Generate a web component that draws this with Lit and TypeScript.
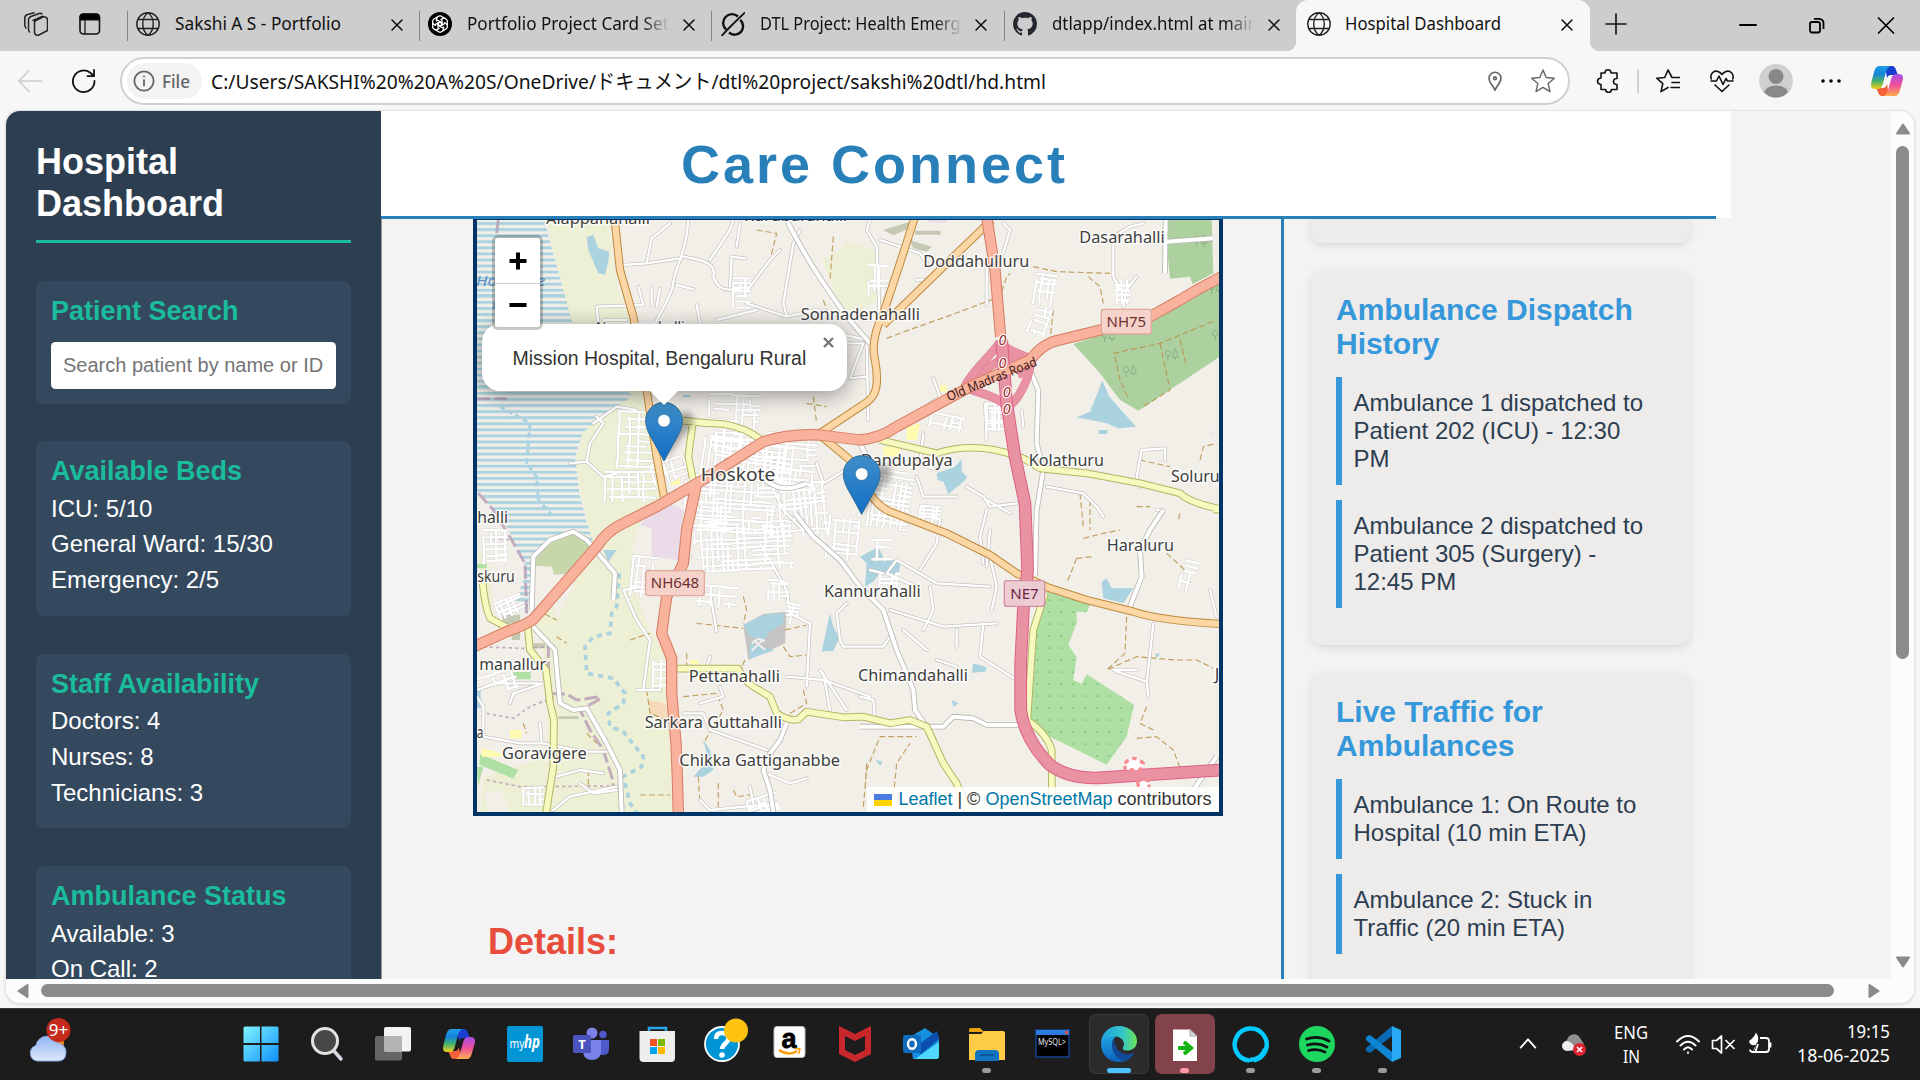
import { LitElement, html, svg, css } from "lit";
import { customElement, property } from "lit/decorators.js";

/* ---------- helpers ---------- */

// Text squeezed to a known width, so UI labels keep their metrics in any font.
const fit = (text: string, width: number, size: number, color = "#111", weight = 400) => html`
  <svg class="fit" width=${width} height=${Math.round(size * 1.5)} style="overflow:visible">
    <text x="0" y=${size * 1.1} textLength=${width} lengthAdjust="spacingAndGlyphs" font-size=${size}
      font-weight=${weight} fill=${color} font-family='"Noto Sans","Noto Sans CJK JP",sans-serif'>${text}</text>
  </svg>`;

const stroke = (d: string, size = 24, color = "#111", w = 1.6) => html`
  <svg width=${size} height=${size} viewBox="0 0 24 24" fill="none" stroke=${color} stroke-width=${w}
    stroke-linecap="round" stroke-linejoin="round"><path d=${d}/></svg>`;

const CROSS = "M6 6L18 18M18 6L6 18";
const GLOBE = "M12 .8a11.2 11.2 0 1 0 0 22.4a11.2 11.2 0 1 0 0-22.4M12 .8c-7 5-7 17.400 0 22.400M12 .8c7 5 7 17.400 0 22.400M2.200 7.500h19.600M2.200 16.500h19.600";

/* ---------- map ---------- */

function rng(seed: number) {
  let s = seed;
  return () => ((s = (s * 16807) % 2147483647) / 2147483647);
}

// A block of short, slightly broken streets: centre, size, tilt and spacing.
function streets(cx: number, cy: number, w: number, h: number, tilt: number, gap: number, seed: number) {
  const r = rng(seed);
  const c = Math.cos(tilt), s = Math.sin(tilt);
  const p = (x: number, y: number) => `${(cx + x * c - y * s).toFixed(0)} ${(cy + x * s + y * c).toFixed(0)}`;
  let d = "";
  for (let y = -h / 2; y < h / 2; y += gap * (0.7 + r() * 0.6)) {
    let x = -w / 2 + r() * w * 0.2;
    while (x < w / 2) {
      const l = 25 + r() * 90;
      if (r() > 0.28) d += `M${p(x, y)}L${p(Math.min(w / 2, x + l), y + (r() - 0.5) * 6)}`;
      x += l;
    }
  }
  for (let x = -w / 2; x < w / 2; x += gap * (0.8 + r() * 0.9)) {
    let y = -h / 2 + r() * h * 0.2;
    while (y < h / 2) {
      const l = 20 + r() * 80;
      if (r() > 0.36) d += `M${p(x, y)}L${p(x + (r() - 0.5) * 6, Math.min(h / 2, y + l))}`;
      y += l;
    }
  }
  return d;
}

const TOWN = [
  streets(790, 640, 150, 170, 0.05, 15, 11), streets(830, 740, 260, 130, 0.12, 14, 12),
  streets(520, 690, 150, 170, 0.03, 19, 13), streets(600, 780, 110, 60, -0.3, 16, 14),
  streets(480, 830, 150, 90, 0, 19, 15), streets(780, 880, 270, 180, 0.06, 13, 16),
  streets(960, 760, 150, 170, 0.1, 15, 17), streets(820, 1010, 290, 140, -0.05, 14, 18),
  streets(1000, 900, 140, 160, -0.1, 17, 19), streets(1120, 980, 90, 140, 0.1, 18, 20),
  streets(520, 1100, 70, 120, 0.1, 17, 21), streets(730, 1160, 140, 60, 0.1, 20, 22),
  streets(925, 1140, 60, 60, 0, 13, 23), streets(1260, 870, 120, 170, 0.15, 15, 24),
  streets(1235, 1020, 60, 60, 0, 16, 25), streets(1575, 620, 50, 80, 0, 12, 26),
  streets(1725, 240, 60, 90, 0.15, 14, 27), streets(1710, 330, 50, 90, 0.3, 14, 28),
  streets(1420, 635, 120, 40, 0.2, 16, 29), streets(75, 1010, 70, 100, 0, 17, 30),
  streets(120, 1190, 80, 50, -0.4, 15, 31), streets(1960, 245, 40, 70, 0, 14, 32),
  streets(2155, 1100, 40, 90, 0.3, 14, 33), streets(880, 1785, 90, 50, -0.3, 12, 34),
  streets(190, 1760, 60, 50, 0, 15, 35), streets(575, 1390, 50, 90, 0, 17, 36),
  streets(1225, 210, 60, 90, 0, 15, 37), streets(815, 250, 50, 90, 0, 15, 38),
  streets(965, 1210, 40, 60, 0.2, 13, 39), streets(1260, 1110, 60, 40, 0, 14, 40),
  streets(80, 1420, 120, 60, -0.3, 24, 41), streets(1380, 915, 60, 50, 0.1, 12, 42),
].join("");

const LANES = `
M655 30C650 130 610 180 608 230C590 290 560 320 555 345M455 165L530 160L545 85L600 40M530 160L630 145M620 225L670 238
M640 140C700 150 740 160 730 200C750 260 800 230 810 240M780 230L785 140L825 145M720 150L780 60L790 30M810 40L800 110
M380 290L520 285M380 290L385 345M400 330L470 330M505 230L520 285M545 232L545 285M570 235L560 290M680 285L690 340
M830 245L870 190L900 150L930 120M830 280L950 320L1040 300L1190 330M950 320L940 280L970 100L990 60M740 330L860 300
M1060 360L1190 390M950 400L1180 400L1140 505L1190 500M370 640L440 590L500 600M300 760L350 755L360 700L400 640L380 620
M350 755L400 800L440 790M1040 760L1060 820L1160 760M905 830L940 900L1000 960M1200 30L1190 60L1220 110L1230 350
M1370 160L1350 130L1230 90M1340 210L1380 208M1550 170L1550 285M1600 40L1620 60L1600 130M1930 90L1930 200L1950 240
M1930 80L1980 50L2020 40M2000 200L1970 240L1960 290M1390 505L1410 560L1380 580M1360 670L1350 760L1400 780M1545 580L1550 690
M1655 600L1660 650M1340 800L1360 860L1460 860M1490 830L1540 860L1560 890L1640 880M1550 870L1620 910
M1190 400L1195 630M1730 830L1840 850L1880 890L1900 920M2000 800L2015 720L2085 715L2085 750M2000 800L2010 830
M1550 900L1530 980L1540 1060M1340 1130L1250 1090L1280 1050L1400 1120L1560 1130M1560 1040L1580 1130L1565 1200
M1350 1080L1400 1000L1410 930M1200 1080L1240 1090M1260 1200L1420 1250L1580 1240M1360 1260L1390 1200L1380 1130M1300 1260L1370 1320
M1540 1240L1530 1340L1640 1410M1460 1260L1460 1310M1400 1350L1460 1370M1170 1310L1240 1310L1260 1280M1560 960L1550 1070
M2000 1380L1930 1380M1940 1385L2030 1415L2035 1460M2050 1240L2030 1420M2220 1140L2240 1220M2080 900L2060 900
M460 1140L500 1230L540 1290L520 1440M460 1140L520 1130M500 1440L570 1440M630 1070L660 1040M720 1150L740 1265
M870 1000L950 1140L960 1210L1020 1240L1010 1430M950 1400L1060 1410L1200 1460M1060 1390L1080 1500M750 1430L760 1460L690 1480
M640 1510L700 1510L720 1560L890 1620M720 1340L710 1370M890 1690L960 1720L1010 1705M840 1730L850 1780M690 1770L720 1800L920 1780
M1110 1290L1120 1310L1210 1310M1130 1180L1100 1210L1110 1290M40 1580L150 1600L220 1600L340 1625L420 1625M210 1540L215 1600
M250 1800L300 1760L390 1740L440 1730M260 1700L330 1680L400 1690M330 1720L370 1750L440 1740M120 1480L130 1450L220 1420
M20 1440L80 1420L210 1420M40 1580L40 1490L20 1460M1170 1460L1210 1470L1215 1530M1130 1500L1050 1380`;

const MAJOR_LANES = `
M950 30C1010 150 1060 220 1130 320L1200 400M975 910L1030 980L1110 1050L1170 1130L1240 1200L1280 1320L1330 1440L1335 1500L1370 1550
M1010 820C940 850 910 830 870 800M1680 480L1705 540L1700 700L1720 780L1700 900L1695 1100M2087 30L2085 190M2090 95L2230 85
M2080 900L2040 960L2010 1020L2015 1100L1980 1190M1170 1550L1420 1550L1450 1520L1510 1525L1550 1545L1650 1545
M180 1240L255 1320L270 1480L310 1500L350 1495L410 1600L450 1680L455 1806M185 1200L190 1040L240 990L310 965L350 990L435 1090L430 1170
M950 1540L930 1590L900 1630L880 1680L900 1740L910 1806M2240 1640L2170 1740M1170 700L1200 760`;

const TRACKS = `
M860 60L920 70L900 150M1090 80L1080 210M1060 270L1080 330M1010 580L1070 590M1030 560L1040 640
M1250 385L1330 355L1430 320L1590 260L1610 200L1620 190M1690 170L1760 185L1920 190M1855 200L1890 230L1900 280M1750 300L1740 390
M1930 430L2070 400L2240 330M1935 440L1950 510L1975 565M2070 400L2100 540L2020 590M2130 390L2150 470M2190 750L2200 710L2240 700
M2010 750L2100 770M1830 850L1840 950M1860 870L1860 960M1840 985L1900 970L1950 960M1820 1045L1790 1120M1820 1045L1870 1040
M2000 890L2040 890M2090 1030L2150 1085M2130 910L2125 930M1970 1220L1965 1330L1910 1380L2000 1340L2120 1350L2180 1350L2230 1375
M2030 1490L2010 1540L2050 1560M2000 1585L2060 1580L2110 1620L2140 1700M1180 1790L1190 1680L1230 1580L1340 1580M1270 1760L1280 1660L1320 1600
M680 1240L820 1255M820 1160L830 1200L820 1240M945 1260L1010 1245M940 1310L960 1340L1010 1335M825 1350L800 1400M650 1330L650 1370
M530 1440L540 1510L590 1530M640 1460L740 1450L760 1500L700 1600M685 1700L690 1780M510 1755L600 1755M745 1720L745 1800M790 1740L800 1760L840 1755
M1000 1440L1010 1480L960 1510M350 1570L380 1600M160 1540L170 1570M355 1680L355 1740M200 1200L260 1230M260 1280L290 1300
M480 1290L540 1270M1190 1660L1185 1740`;

const TRUNK = `M0 1315L110 1265Q165 1245 190 1228L380 1010Q410 965 450 945L560 890L690 815L880 695Q960 670 1050 675L1170 690Q1230 685 1280 650L1500 530L1680 450Q1720 400 1760 392L1900 358L2040 320L2130 270L2180 240L2255 200
M680 820L650 960L640 1060L590 1160L575 1270L605 1345L605 1450L618 1600L622 1700L625 1810
M1550 20L1575 180L1592 380`;

const MOTORWAY = `M1595 390L1610 580L1635 740L1665 880L1673 1080L1660 1200L1652 1360L1652 1500Q1665 1590 1740 1665Q1800 1710 1900 1703L2255 1680`;
const RAMPS = `M1588 400C1560 440 1500 490 1485 530C1520 550 1560 550 1600 580M1600 405C1620 430 1680 435 1682 455C1680 500 1650 560 1622 585M1505 530L1560 470L1620 430M1660 500L1640 455L1600 420`;

const SECONDARY = `M433 20L450 180L490 320L530 540L560 740L582 860M1335 20L1290 160L1240 310Q1200 390 1215 450C1235 560 1200 570 1170 590L1050 670
M1565 30L1420 170L1240 345M1050 675L1140 750L1200 850Q1225 890 1260 905L1430 970L1560 1035L1640 1090L1740 1135L1850 1170L1990 1205Q2070 1232 2255 1242`;

const TERTIARY = `M638 632Q700 640 760 642Q820 650 875 690M668 640L655 740L668 805M1230 690L1400 730Q1520 690 1660 745L1710 775L1850 790L2010 820L2130 850Q2160 880 2255 898
M38 1120Q45 1190 60 1225L110 1252M172 1240L180 1320L228 1380L240 1480L252 1530L250 1670L228 1810
M622 1376L805 1376Q820 1410 850 1430L900 1460L920 1510Q960 1535 985 1528L1010 1505L1120 1522L1180 1520L1260 1540L1320 1530L1370 1550L1420 1660L1460 1720L1500 1820
M1725 1150L1690 1260L1672 1530Q1730 1570 1745 1620L1746 1810M2230 898L2260 900`;

const TREE = "M0 0v-14M-8-22a8 9 0 1 0 16 0a8 9 0 1 0-16 0M22 0v-10M22-36l-9 26h18z";

const LABELS: [string, number, number, number, number][] = [
  ["Alappanahalli", 228, 42, 312, 44], ["Kurubarahalli", 822, 34, 310, 44], ["Hoskote", 692, 812, 224, 54],
  ["Sonnadenahalli", 992, 331, 358, 46], ["Doddahulluru", 1360, 170, 318, 46], ["Dasarahalli", 1828, 98, 256, 46],
  ["Kolathuru", 1676, 767, 226, 46], ["Soluru", 2103, 816, 146, 46], ["Dandupalya", 1172, 767, 276, 46],
  ["halli", 22, 938, 92, 46], ["skuru", 22, 1116, 112, 46], ["manallur", 28, 1381, 200, 46], ["a", 20, 1585, 20, 46],
  ["Goravigere", 96, 1646, 254, 46], ["Pettanahalli", 656, 1416, 274, 46], ["Sarkara Guttahalli", 524, 1554, 412, 46],
  ["Chikka Gattiganabbe", 628, 1667, 482, 46], ["Kannurahalli", 1062, 1162, 290, 46], ["Chimandahalli", 1164, 1414, 330, 46],
  ["Haraluru", 1910, 1023, 202, 46], ["Narayanahalli", 378, 366, 266, 42], ["J", 2234, 1410, 14, 46],
];

const cased = (d: string, fill: string, edge: string, w: number, e = 3) => svg`
  <path d=${d} stroke=${edge} stroke-width=${w + e * 2}/><path d=${d} stroke=${fill} stroke-width=${w}/>`;

const marker = (x: number, y: number) => svg`
  <g transform="translate(${x} ${y})">
    <path d="M0 120L62 40Q100 10 84-20Q60-40 20 0z" fill="#000" opacity=".32" filter="url(#soft)"/>
    <path d="M-55 0A55 55 0 0 1 55 0C55 24 42 45 30 66L0 121L-30 66C-42 45-55 24-55 0z" fill="url(#pin)" stroke="#2e6c97" stroke-width="3"/>
    <circle r="19" fill="#fff" stroke="#2e6c97" stroke-opacity=".6" stroke-width="3"/>
  </g>`;

const shield = (t: string, x: number, y: number, w: number, h: number, bg: string, edge: string, ink: string) => svg`
  <rect x=${x} y=${y} width=${w} height=${h} rx="8" fill=${bg} stroke=${edge} stroke-width="4"/>
  <text x=${x + w / 2} y=${y + h / 2 + 15} text-anchor="middle" font-size="45" fill=${ink}>${t}</text>`;

@customElement("street-map")
export class StreetMap extends LitElement {
  static styles = css`
    :host { display: block; position: relative; box-sizing: border-box; width: 750px; height: 600px; border: 4px solid #003366; overflow: hidden; }
    .canvas { display: block; width: 742px; height: 592px; }
    .popup { position: absolute; left: 4.500px; top: 104px; width: 365px; height: 67px; box-sizing: border-box; padding: 22px 31px; border-radius: 18px; background: #fff; color: #333; font: 19.5px/24px "Liberation Sans", sans-serif; white-space: nowrap; box-shadow: 0 4px 21px rgba(0,0,0,.4); }
    .tip { position: absolute; left: 172px; top: 170px; width: 30px; height: 15px; background: #fff; clip-path: polygon(0 0, 100% 0, 50% 100%); }
    .close { position: absolute; left: 346px; top: 116.500px; width: 11px; height: 11px; color: #757575; }
    .zoom { position: absolute; left: 15px; top: 15px; width: 45px; border: 3px solid rgba(0,0,0,.22); border-radius: 6px; background: #fff; background-clip: padding-box; }
    .zoom div { display: flex; align-items: center; justify-content: center; height: 45px; }
    .zoom div + div { border-top: 1px solid #ccc; height: 44px; padding-bottom: 1px; box-sizing: border-box; }
    .credit { position: absolute; right: 0; bottom: 0; display: flex; align-items: center; height: 25px; padding: 0 7.500px 0 7px; background: rgba(255,255,255,.85); font: 18px/25px "Liberation Sans", sans-serif; color: #333; white-space: pre; }
    .credit a { color: #0078a8; }
    .flag { width: 18px; height: 12px; margin-right: 6px; background: linear-gradient(#4c7be1 50%, #ffd500 50%); }
  `;

  render() {
    return html`
      <svg class="canvas" viewBox="21 30 2226 1776" fill="none" stroke-linejoin="round">
        <defs>
          <pattern id="hatch" width="40" height="18.200" patternUnits="userSpaceOnUse"><rect width="40" height="8.500" fill="#aad3df"/></pattern>
          <pattern id="dots" width="36" height="36" x="1720" y="1152" patternUnits="userSpaceOnUse"><circle cx="18" cy="18" r="2.600" fill="#6fae70"/></pattern>
          <linearGradient id="pin" x1="0" y1="0" x2="0" y2="1"><stop offset="0" stop-color="#3f8ec8"/><stop offset="1" stop-color="#126fc6"/></linearGradient>
          <filter id="soft" x="-50%" y="-50%" width="200%" height="200%"><feGaussianBlur stdDeviation="9"/></filter>
        </defs>
        <rect x="21" y="30" width="2226" height="1776" fill="#f2efe9"/>
        <path fill="#eef0d5" d="M228 30H418L425 130L445 240L490 340L530 540L560 740L580 860L520 910L490 1000V1130L540 1260L590 1330L600 1450L615 1806H30L40 1700L230 1640L235 1400L200 1250L250 1130L370 1020L345 900L315 760L340 660L480 560L300 330z"/>
        <path fill="#eef0d5" d="M1055 150L1115 120L1130 90L1220 125V270L1175 300H1130L1100 260zM21 1010L60 1050L70 1190H40z"/>
        <path fill="#f2efe9" d="M245 1145L300 1090L310 1130L260 1230zM40 1750L90 1740L120 1806H60zM110 1620H180V1640H110z"/>
        <path fill="url(#hatch)" d="M21 30H222L305 330L350 480L490 556L400 620L340 665L315 740L328 850L348 930L375 1010L340 970L300 965L190 1030L172 1210L135 1180L168 1090L110 950L30 850H21z"/>
        <path fill="#f2efe9" d="M21 850L110 950L165 1060L110 1160L21 1000z"/>
        <path fill="#c8d7ab" d="M190 1055L222 1008L310 968L342 986L372 1020L312 1090L252 1094L245 1070L192 1067z"/>
        <path fill="#ebdbe8" d="M545 900L600 880L640 900L625 1050L545 1040V955L510 945zM700 820L750 818L745 840H705zM1370 30H1430V38H1380z"/>
        <path fill="#add19e" d="M2083 30H2225L2230 190L2168 222L2160 200L2100 206zM1810 402L1900 372L2045 322L2150 262L2247 222V442L2005 602L1950 570L1890 490z"/>
        <path fill="#aedfa3" d="M1730 1145L1860 1185L1850 1207L1820 1205L1820 1240L1795 1305L1820 1342L1810 1410L1835 1422L1850 1393L1992 1484L1970 1580L1910 1664L1740 1580L1670 1532L1680 1300z"/>
        <path fill="url(#dots)" d="M1730 1145L1860 1185L1850 1207L1820 1205L1820 1240L1795 1305L1820 1342L1810 1410L1835 1422L1850 1393L1992 1484L1970 1580L1910 1664L1740 1580L1670 1532L1680 1300z"/>
        <path fill="#aedfa3" d="M30 1632L145 1680L130 1706L28 1664zM21 1670H40L24 1730zM130 1386H182V1408H130zM21 1062H50V1075H21z"/>
        <path fill="#c5c8b2" d="M95 1215H150V1290H125V1240L95 1250zM185 1300H225V1315H185zM265 1519H325V1527H265zM1240 60L1320 35L1330 50L1270 76zM1335 62H1412V74H1335zM1320 90L1385 110L1370 125L1330 115z"/>
        <path fill="#f6d9b8" d="M535 1472L575 1476L600 1500L590 1525L540 1515z"/>
        <path fill="#fffbb0" d="M120 1560H155V1585H120zM35 1615L95 1630V1640H35zM660 1350H685V1362H660zM1410 525H1430V545H1410zM1310 650L1350 640L1340 690H1310zM1240 710H1290V740H1240zM600 820L630 805V825H605z"/>
        <path fill="#c5c3c3" d="M820 1245L880 1212L950 1205L945 1300L835 1350z"/>
        <path fill="#aad3df" d="M350 80L370 75L385 115L418 125L415 155L405 195L385 190L355 120zM1055 1325L1080 1210L1090 1250L1108 1285L1090 1322L1045 1325zM820 1245L880 1215L940 1208V1240L900 1265L880 1290L840 1280zM840 1300L870 1310L915 1320L840 1346z
          M1170 1040L1225 1010L1240 1042L1292 1055L1285 1095L1230 1090L1210 1115L1185 1130L1190 1060zM1400 790L1455 770L1475 748L1475 785L1492 800L1480 815L1435 852L1420 815L1402 810zM1890 530L1896 510L1918 560L1998 650L1945 655L1910 640L1820 622L1860 605zM1885 660H1912V672H1885z
          M2212 650L2236 680L2228 672zM1895 1115L1910 1105L1925 1135L1990 1135L1960 1180L1900 1165zM1510 1360L1550 1372L1545 1385L1505 1388zM1445 1470L1465 1480L1450 1490zM1218 1650L1238 1655L1230 1668zM2055 1332L2070 1330L2060 1345z
          M700 1590L720 1620L730 1680L700 1700L670 1700L715 1650zM400 1020L440 1020L415 1055zM21 1435H32V1495H21zM640 750L660 775H640zM660 555H640V562H660z"/>
        <g stroke="#739670" stroke-opacity=".55" stroke-width="3">
          <path d=${TREE} transform="translate(2180 110)"/><path d=${TREE} transform="translate(1968 500)"/>
          <path d=${TREE} transform="translate(2094 452)"/><path d=${TREE} transform="translate(2225 252)"/>
          <path d=${TREE} transform="translate(2236 392)"/><path d=${TREE} transform="translate(1904 396)"/>
        </g>
        <path d="M448 1090L440 1190L425 1210L420 1270L370 1280L345 1310L350 1390L430 1405L465 1450L460 1480L415 1510L420 1550L460 1565L520 1640L515 1670L460 1700L480 1780L500 1806" stroke="#aad3df" stroke-width="11" stroke-dasharray="16 14"/>
        <path d="M90 590L180 640L170 760L200 800L205 870L245 915" stroke="#aad3df" stroke-width="9" stroke-dasharray="16 10"/>
        <g stroke="#b397b3" stroke-opacity=".75">
          <path d="M85 30L80 70M21 566L110 566M25 850L70 900L125 990L165 1060L170 1220L235 1300L235 1450L290 1452L320 1470L390 1460L385 1470L330 1500L360 1560L400 1620L425 1700L430 1730L455 1740L460 1806" stroke-width="9" stroke-dasharray="40 12"/>
          <path d="M21 1310L160 1315L240 1310M50 1510L130 1525L180 1490L280 1450M50 1710L150 1730L440 1728M50 985L130 990" stroke-width="5" stroke-dasharray="10 9"/>
        </g>
        <path d=${TRACKS} stroke="#b8924a" stroke-opacity=".85" stroke-width="3.500" stroke-dasharray="18 9"/>
        <path d=${TOWN} stroke="#d2cfcd" stroke-width="9.500" stroke-linecap="round"/>
        <path d=${LANES} stroke="#c4c1bf" stroke-width="11" stroke-linecap="round"/>
        <path d=${TOWN + LANES} stroke="#fff" stroke-width="7" stroke-linecap="round"/>
        ${cased(MAJOR_LANES, "#fff", "#b9b6b4", 12, 2.5)}
        ${cased(TERTIARY, "#f7fabf", "#b3b465", 17)}
        ${cased(SECONDARY, "#fcd6a4", "#bd8a3d", 19)}
        ${cased(RAMPS, "#e892a2", "#e0839a", 22, 2)}
        ${cased(TRUNK, "#f9b29c", "#d67b62", 28)}
        ${cased(MOTORWAY, "#e892a2", "#dd5f85", 32)}
        <path d="M1510 525L1690 448" stroke="#f9b29c" stroke-width="24"/>
        <path d="M1965 1660Q1990 1630 2020 1660L2010 1680H1965zM2000 1712L2040 1712L2035 1740H2010z" fill="#fff" stroke="#f58b93" stroke-width="10" stroke-dasharray="14 12"/>
        <g font-family='"Noto Sans",sans-serif'>
          <text x="18" y="229" font-size="44" font-style="italic" fill="#5b8fc6" textLength="208" lengthAdjust="spacingAndGlyphs">Hosakote</text>
          <text x="66" y="296" font-size="44" font-style="italic" fill="#5b8fc6">Lake</text>
          ${LABELS.map(([t, x, y, w, s]) => svg`<text x=${x} y=${y} font-size=${s} textLength=${w} lengthAdjust="spacingAndGlyphs" fill="#403e3d"
            stroke="#fff" stroke-opacity=".75" stroke-width="9" paint-order="stroke">${t}</text>`)}
          <text transform="translate(1436 574) rotate(-22)" font-size="39" textLength="288" lengthAdjust="spacingAndGlyphs" fill="#3b2020">Old Madras Road</text>
          ${[[1597, 405], [1597, 475], [1610, 560], [1610, 613]].map(([x, y]) => svg`<text x=${x} y=${y} font-size="43" font-style="italic" text-anchor="middle" fill="#a02b2b" stroke="#fff" stroke-width="7" paint-order="stroke">0</text>`)}
          ${shield("NH75", 1894, 298, 150, 74, "#f6d3ca", "#e0a99c", "#6d2f2f")}
          ${shield("NH648", 527, 1082, 176, 75, "#f6d3ca", "#e0a99c", "#6d2f2f")}
          ${shield("NE7", 1603, 1112, 121, 77, "#eccbd3", "#d38ea1", "#6d1f42")}
        </g>
        <path d="M850 1290L885 1320M880 1288L845 1322M846 1300l20-14M866 1286l18 8" stroke="#f0eeee" stroke-width="6"/>
        ${marker(582, 632)}${marker(1175, 792)}
      </svg>
      <div class="popup">Mission Hospital, Bengaluru Rural</div>
      <div class="tip"></div>
      <svg class="close" viewBox="0 0 11 11" stroke="#757575" stroke-width="2.400"><path d="M1 1L10 10M10 1L1 10"/></svg>
      <div class="zoom">
        <div><svg width="18" height="18" viewBox="0 0 18 18"><path d="M0.500 9H17.500M9 .5V17.500" stroke="#000" stroke-width="4"/></svg></div>
        <div><svg width="18" height="18" viewBox="0 0 18 18"><path d="M.5 9H17.500" stroke="#000" stroke-width="4"/></svg></div>
      </div>
      <div class="credit"><i class="flag"></i><a>Leaflet</a> | © <a>OpenStreetMap</a> contributors</div>`;
  }
}

/* ---------- dashboard page ---------- */

@customElement("hospital-page")
export class HospitalPage extends LitElement {
  static styles = css`
    :host { display: flex; width: 1885px; height: 868px; overflow: hidden; background: #f3f3f3; font-family: "Liberation Sans", Arial, sans-serif; }
    h1, h2, h3, p { margin: 0; }
    .side { flex: none; box-sizing: border-box; width: 375px; padding: 30px 30px 0; background: #2c3e50; color: #fff; height: 868px; overflow: hidden; }
    .side h2 { height: 102px; box-sizing: border-box; font-size: 36px; line-height: 42px; border-bottom: 3px solid #1abc9c; margin-bottom: 38px; padding-right: 80px; }
    .card { box-sizing: border-box; height: 174.6px; padding: 15px; margin-bottom: 38px; border-radius: 7.5px; background: #34495e; }
    .card.search { height: 122.500px; margin-bottom: 37.500px; }
    .card h3 { font-size: 27px; line-height: 31px; margin-bottom: 3.500px; color: #1abc9c; }
    .card p { font-size: 24px; line-height: 35.700px; }
    .field { height: 46.500px; box-sizing: border-box; margin-top: 15px; padding: 0 12px; border-radius: 4.500px; background: #fff; color: #757575; font-size: 20px; line-height: 46px; white-space: nowrap; }
    .page { flex: 1; min-width: 0; }
    .top { position: relative; z-index: 1; box-sizing: border-box; width: 1350px; height: 107px; background: #fff; }
    .top h1 { box-sizing: border-box; width: 1335px; height: 108px; border-bottom: 3px solid #2980b9; padding: 22px 0 0 300px; font-size: 54px; line-height: 62px; letter-spacing: 3px; color: #2980b9; }
    .cols { display: flex; margin-top: 1px; height: 760px; }
    .center { flex: none; box-sizing: border-box; width: 903px; padding-left: 91px; border-right: 3px solid #2980b9; border-left: 1px solid #999; }
    street-map { margin-top: -3px; }
    .details { margin: 105px 0 0 15px; font-size: 36px; line-height: 42px; color: #e74c3c; }
    .right { padding-left: 27px; width: 381px; }
    .panel { box-sizing: border-box; width: 379px; padding: 23px 26px 0 25px; margin-bottom: 27px; border-radius: 12px; background: #eeebeb; box-shadow: 0 3px 9px rgba(0,0,0,.1); }
    .panel.prev { height: 24px; padding: 0; border-radius: 0 0 12px 12px; }
    .panel.history { height: 375px; }
    .panel.traffic { height: 400px; }
    .panel h2 { font-size: 30px; line-height: 34px; color: #3498db; margin-bottom: 16px; }
    .entry { padding: 12px 12px 12px 11.500px; margin-bottom: 15px; border-left: 6px solid #3498db; font-size: 24px; line-height: 28px; color: #2c3e50; }
  `;

  private groups: [string, string[]][] = [
    ["Available Beds", ["ICU: 5/10", "General Ward: 15/30", "Emergency: 2/5"]],
    ["Staff Availability", ["Doctors: 4", "Nurses: 8", "Technicians: 3"]],
    ["Ambulance Status", ["Available: 3", "On Call: 2"]],
  ];

  render() {
    return html`
      <aside class="side">
        <h2>Hospital Dashboard</h2>
        <div class="card search"><h3>Patient Search</h3><div class="field">Search patient by name or ID</div></div>
        ${this.groups.map(([t, rows]) => html`<div class="card"><h3>${t}</h3>${rows.map((r) => html`<p>${r}</p>`)}</div>`)}
      </aside>
      <main class="page">
        <header class="top"><h1>Care Connect</h1></header>
        <div class="cols">
          <section class="center"><street-map></street-map><h2 class="details">Details:</h2></section>
          <section class="right">
            <div class="panel prev"></div>
            <div class="panel history">
              <h2>Ambulance Dispatch History</h2>
              <div class="entry">Ambulance 1 dispatched to Patient 202 (ICU) - 12:30 PM</div>
              <div class="entry">Ambulance 2 dispatched to Patient 305 (Surgery) - 12:45 PM</div>
            </div>
            <div class="panel traffic">
              <h2>Live Traffic for Ambulances</h2>
              <div class="entry">Ambulance 1: On Route to Hospital (10 min ETA)</div>
              <div class="entry">Ambulance 2: Stuck in Traffic (20 min ETA)</div>
            </div>
          </section>
        </div>
      </main>`;
  }
}

/* ---------- browser chrome ---------- */

const copilot = (size: number) => html`
  <svg width=${size} height=${size} viewBox="0 0 34 34">
    <defs>
      <linearGradient id="ca" x1="0" y1="0" x2="0" y2="1"><stop offset="0" stop-color="#1f9fe8"/><stop offset=".35" stop-color="#1583d8"/><stop offset=".65" stop-color="#43b26b"/><stop offset="1" stop-color="#f4d016"/></linearGradient>
      <linearGradient id="cb" x1="0" y1="0" x2="0" y2="1"><stop offset="0" stop-color="#a54fe6"/><stop offset=".5" stop-color="#ee4f9b"/><stop offset="1" stop-color="#ffae4d"/></linearGradient>
    </defs>
    <path d="M15 2H22Q25 2 26 6L28 11H21Q18 11 17 14z" fill="#1a3fd0"/>
    <path d="M19 32H12Q9 32 8 28L6 24H13Q16 24 17 20z" fill="#f4603a"/>
    <path d="M9 2H20Q17 4 16 8L12.500 21Q11.500 25 7 25H5Q0 25 1.200 19L4 8Q5.500 2 9 2z" fill="url(#ca)"/>
    <path d="M25 32H14Q17 30 18 26L21.500 14Q22.500 10 27 10H29Q34 10 32.800 16L30 26Q28.500 32 25 32z" fill="url(#cb)"/>
  </svg>`;

@customElement("browser-bar")
export class BrowserBar extends LitElement {
  static styles = css`
    :host { display: block; height: 111px; background: #f7f7f7; }
    svg { display: block; flex: none; }
    .tabs { display: flex; height: 51px; background: #cdcdcd; }
    .lead { display: flex; flex: none; width: 126.500px; box-sizing: border-box; padding: 12px 0 0 24px; gap: 30.500px; }
    .tab { display: flex; flex: none; box-sizing: border-box; width: 292.400px; padding: 12px 0 0 9.500px; position: relative; }
    .tab::before { content: ""; position: absolute; left: 0; top: 11px; width: 1px; height: 30px; background: #858585; }
    .name { width: 203px; margin: -1px 0 0 15px; overflow: hidden; height: 30px; }
    .name.cut { -webkit-mask-image: linear-gradient(90deg, #000 86%, transparent 100%); mask-image: linear-gradient(90deg, #000 86%, transparent 100%); }
    .x { margin: 3px 0 0 8.500px; }
    .tab.active { width: 294px; background: #f7f7f7; border-radius: 12px 12px 0 0; padding-left: 11px; }
    .tab.active .name { margin-left: 14px; }
    .tab.active::before { left: -10px; top: 41px; width: 314px; height: 10px; background: radial-gradient(circle at 0 0, transparent 10px, #f7f7f7 10.500px) left / 10px 10px no-repeat, radial-gradient(circle at 100% 0, transparent 10px, #f7f7f7 10.500px) right / 10px 10px no-repeat; }
    .plus { margin: 11.500px 0 0 13.500px; }
    .win { display: flex; flex: 1; justify-content: flex-end; gap: 45px; padding: 13px 22.500px 0 0; }
    .tools { display: flex; align-items: center; height: 60px; padding-left: 18px; }
    .reload { margin-left: 30px; }
    .address { display: flex; align-items: center; box-sizing: border-box; width: 1450px; height: 48px; margin-left: 24px; border: 2px solid #d1d1d1; border-radius: 24px; background: #fff; }
    .file { display: flex; align-items: center; box-sizing: border-box; width: 75px; height: 36px; margin-left: 5px; padding-left: 6px; gap: 7px; border-radius: 18px; background: #f3f3f3; }
    .url { margin-left: 9px; }
    .pin { margin-left: 438px; }
    .star { margin-left: 25px; }
    .ext { display: flex; align-items: center; margin-left: 26px; }
    .bar { width: 2px; height: 24px; background: #d0d0d0; margin: 0 17px; }
    .ext > * { flex: none; }
    .g30 { margin-left: 30px; }
    .ava { margin-left: 25px; }
    .dots { margin-left: 26px; }
    .cop { margin-left: 27px; }
  `;

  private tab(icon: unknown, title: string, width: number, active = false) {
    return html`<div class="tab ${active ? "active" : ""}">${icon}
      <div class="name ${width > 190 ? "cut" : ""}">${fit(title, width, 17.5)}</div>
      <div class="x">${stroke(CROSS, 20, "#111", 1.9)}</div></div>`;
  }

  render() {
    const globe = stroke(GLOBE, 24, "#222", 1.4);
    return html`
      <div class="tabs">
        <div class="lead">
          ${stroke("M9 8.500L18 4.500Q23.500 4.500 23.500 8V18.500L14 23.500Q10.500 23 10.500 20V11Q10.500 8.500 13 8L20 4.600M5.500 20Q4.500 19 4.500 17V8Q4.500 5.500 7 4.500L15 1.500Q17 1 18 2M2 16Q.8 15 .8 13V6Q.8 3.500 3 2.800L10 .8", 24, "#222", 1.5)}
          <svg width="22" height="24" viewBox="0 0 22 24"><rect x="1" y="2" width="19.500" height="20" rx="3.500" fill="none" stroke="#111" stroke-width="1.600"/><path d="M1 8V5Q1 2 4 2H17.500Q20.500 2 20.500 5V8zM6 8V22" stroke="#111" stroke-width="1.200"/></svg>
        </div>
        ${this.tab(globe, "Sakshi A S - Portfolio", 166)}
        ${this.tab(html`<svg width="24" height="24" viewBox="0 0 24 24" fill="none" stroke="#fff" stroke-width="1.300"><circle cx="12" cy="12" r="12" fill="#000" stroke="none"/>${[0, 60, 120, 180, 240, 300].map((a) => svg`<path d="M8.500 9.500V7.500A3.500 3.500 0 0 1 14.500 5L17 6.500M9 8L13.500 10.500V14" transform="rotate(${a} 12 12)"/>`)}</svg>`, "Portfolio Project Card Setup", 223)}
        ${this.tab(html`<svg width="24" height="24" viewBox="0 0 24 24" fill="none" stroke="#111" stroke-width="2.400"><path d="M17 4.500A8.300 8.300 0 0 0 5 17.500M19.300 8A8.300 8.300 0 0 1 8 20.500"/><path d="M24 .5Q14 10 9.500 14.500T.5 24" stroke-width="1.900"/></svg>`, "DTL Project: Health Emergency", 236)}
        ${this.tab(html`<svg width="24" height="24" viewBox="0 0 16 16"><path fill="#24292f" d="M8 0C3.580 0 0 3.580 0 8c0 3.540 2.290 6.530 5.470 7.590.4.070.55-.17.55-.38 0-.19-.01-.82-.01-1.490-2.010.37-2.530-.49-2.690-.94-.09-.23-.48-.94-.82-1.130-.28-.15-.68-.52-.01-.53.63-.01 1.080.58 1.230.82.72 1.210 1.870.87 2.330.66.07-.52.28-.87.51-1.070-1.780-.2-3.640-.89-3.640-3.950 0-.87.31-1.590.82-2.150-.08-.2-.36-1.020.08-2.120 0 0 .67-.21 2.200.82.64-.18 1.320-.27 2-.27s1.360.09 2 .27c1.530-1.040 2.200-.82 2.200-.82.44 1.100.16 1.920.08 2.120.51.56.82 1.270.82 2.150 0 3.070-1.870 3.750-3.650 3.950.29.25.54.73.54 1.480 0 1.070-.01 1.930-.01 2.200 0 .21.15.46.55.38A8.010 8.010 0 0 0 16 8c0-4.420-3.580-8-8-8z"/></svg>`, "dtlapp/index.html at main", 206)}
        ${this.tab(globe, "Hospital Dashboard", 156, true)}
        <div class="plus">${stroke("M12 2V22M2 12H22", 24, "#111", 1.6)}</div>
        <div class="win">
          ${stroke("M4 12H20", 24, "#000", 2)}
          <svg width="24" height="24" viewBox="0 0 24 24" fill="none" stroke="#000" stroke-width="1.800"><rect x="5" y="9" width="10" height="10.500" rx="2"/><path d="M9 5.800H14Q18.500 6 18.500 10V16"/></svg>
          ${stroke("M4.500 5L19.500 20M19.500 5L4.500 20", 24, "#000", 1.7)}
        </div>
      </div>
      <div class="tools">
        ${stroke("M24 12H1M11 1.500L.8 12L11 22.500", 24, "#cbcbcb", 1.5)}
        <div class="reload">${stroke("M22.500 12A10.800 10.800 0 1 1 18 3.500L22 7M22 1V7.200H15.500", 24, "#111", 1.8)}</div>
        <div class="address">
          <div class="file">${stroke("M12 1.500a10.500 10.500 0 1 0 0 21a10.500 10.500 0 1 0 0-21M12 11V17M12 7V7.200", 22, "#666", 2)}${fit("File", 28, 18, "#666", 500)}</div>
          <div class="url">${fit("C:/Users/SAKSHI%20%20A%20S/OneDrive/ドキュメント/dtl%20project/sakshi%20dtl/hd.html", 835, 20.5, "#111")}</div>
          <div class="pin">${stroke("M12 22C10 17 5.500 14 5.500 9A6.500 6.500 0 0 1 18.500 9C18.500 14 14 17 12 22M12 7.500a1.500 1.500 0 1 0 0 3a1.500 1.500 0 1 0 0-3", 22, "#666", 1.8)}</div>
          <div class="star">${stroke("M12 1L15.200 8.500L23.300 9.200L17.200 14.600L19 22.600L12 18.300L5 22.600L6.800 14.600L.7 9.200L8.800 8.500z", 24, "#666", 1.4)}</div>
        </div>
        <div class="ext">
          ${stroke("M5 4H9Q9 .8 12 .8T15 4H21V9.500Q17.500 9.500 17.500 12.500T21 15.500V20.500H15.500Q15 23.500 12.500 23.500T9.500 20.500H5V15.500Q1.500 15 1.500 12.200T5 9z", 24, "#111", 1.6)}
          <div class="bar"></div>
          ${stroke("M23.500 8.500H16L12 1L8.700 8.500L.7 9.200L6.800 14.600L5 22.600L12 18.500M16 13.500H23.500M15 18.500H23.500", 24, "#111", 1.6)}
          <div class="g30">${stroke("M1.300 10C-.5 5 4 1 8 2.500Q10.500 3.500 12 5.500Q13.500 3.500 16 2.500C20 1 24.500 5 22.700 10M1 12H6.500L9 7L13 15.500L16 9.500L17.500 12H23M5 16L12 22.500L19 16", 24, "#111", 1.6)}</div>
          <svg class="ava" width="34" height="34" viewBox="0 0 34 34"><circle cx="17" cy="17" r="17" fill="#d2d0ce"/><circle cx="17" cy="12.500" r="7.500" fill="#8a8886"/><path d="M5 28Q8 21.500 17 21.500T29 28Q24 33.500 17 33.500T5 28" fill="#8a8886"/></svg>
          <svg class="dots" width="24" height="24" viewBox="0 0 24 24"><circle cx="4" cy="12" r="1.800"/><circle cx="12" cy="12" r="1.800"/><circle cx="20" cy="12" r="1.800"/></svg>
          <div class="cop">${copilot(34)}</div>
        </div>
      </div>`;
  }
}

/* ---------- taskbar ---------- */

@customElement("task-bar")
export class TaskBar extends LitElement {
  static styles = css`
    :host { display: flex; box-sizing: border-box; height: 72px; border-top: 1.500px solid #3b3b3b; background: #1c1c1c; color: #fff; }
    svg { display: block; flex: none; }
    .weather { width: 201px; padding: 8px 0 0 27px; box-sizing: border-box; }
    .apps { display: flex; gap: 6px; padding: 5px 0 0 29.500px; width: 1188px; }
    .app { width: 60px; height: 60px; flex: none; border-radius: 7px; position: relative; }
    .app.pad { box-sizing: border-box; padding: 13px; }
    .app.on { background: #2b2b2b; box-shadow: inset 0 0 0 1px #383838; }
    .app.rec { background: #82444a; }
    .app.run::after { content: ""; position: absolute; left: 25px; bottom: 1px; width: 9px; height: 5px; border-radius: 3px; background: #9a9a9a; }
    .app.on::after { left: 18px; width: 24px; background: #4cc2ff; }
    .app.rec::after { background: #ff99a4; }
    .tray { display: flex; flex: 1; align-items: flex-start; justify-content: flex-end; padding: 11px 30px 0 0; }
    .stack { display: flex; flex-direction: column; align-items: center; }
    .stack .fit { height: 24px; }
    .clock { align-items: flex-end; margin-left: 24px; margin-top: -1px; }
    .mid { margin-top: 12px; }
    .chevron { margin-right: 23px; }
    .cloud { margin-right: 28px; }
    .wifi { margin-left: 28px; }
    .sound { margin-left: 11px; }
    .power { margin-left: 12px; }
  `;

  private app(body: unknown, cls = "") {
    return html`<div class="app ${cls}"><svg width="60" height="60" viewBox="0 0 60 60">${body}</svg></div>`;
  }

  render() {
    return html`
      <div class="weather"><svg width="50" height="48" viewBox="0 0 50 48">
        <defs><linearGradient id="cl" x1="0" y1="0" x2="0" y2="1"><stop offset="0" stop-color="#8fb4f2"/><stop offset="1" stop-color="#dde9fb"/></linearGradient></defs>
        <circle cx="29" cy="26" r="8" fill="#f58a1f"/>
        <path d="M10 44A8 8 0 0 1 9 28.500A11 11 0 0 1 30 26A9 9 0 0 1 39 35Q39 44 31 44z" fill="url(#cl)" stroke="#88a9e4" stroke-width="1"/>
        <circle cx="31.500" cy="13" r="12" fill="#c42b1c"/><text x="31.500" y="18.500" font-size="17" text-anchor="middle" fill="#fff" font-family='"Noto Sans",sans-serif'>9+</text></svg></div>
      <div class="apps">
        ${this.app(svg`<defs><linearGradient id="w" gradientUnits="userSpaceOnUse" x1="13" y1="13" x2="48" y2="48"><stop offset="0" stop-color="#7df3fd"/><stop offset="1" stop-color="#0e8ffb"/></linearGradient></defs><path fill="url(#w)" d="M14 12.500H29V29H12.500V14Q12.500 12.500 14 12.500zM30.500 12.500H46Q47.500 12.500 47.500 14V29H30.500zM12.500 31H29V47.500H14Q12.500 47.500 12.500 46zM30.500 31H47.500V46Q47.500 47.500 46 47.500H30.500z"/>`)}
        ${this.app(svg`<circle cx="28" cy="27" r="12.500" fill="#474747" stroke="#e3e3e3" stroke-width="3"/><path d="M37 37L44 45" stroke="#d5d9e2" stroke-width="3.500" stroke-linecap="round"/>`)}
        ${this.app(svg`<rect x="12" y="22" width="27" height="24.500" rx="2" fill="#666"/><rect x="21" y="13" width="27" height="24.500" rx="2" fill="#f3f3f3"/><path d="M21 22H39V37.500H21z" fill="#b5b5b5"/>`)}
        <div class="app pad">${copilot(34)}</div>
        ${this.app(svg`<rect x="12" y="12" width="36" height="36" rx="2" fill="#0096d6"/><text x="14.500" y="34" font-size="12.500" fill="#fff" textLength="15" lengthAdjust="spacingAndGlyphs" font-family='"Noto Sans",sans-serif'>my</text><text x="29" y="34" font-size="18" fill="#fff" font-style="italic" font-weight="700" textLength="16" lengthAdjust="spacingAndGlyphs" font-family='"Noto Sans",sans-serif'>hp</text>`)}
        ${this.app(svg`<circle cx="31" cy="19" r="5.500" fill="#7b83eb"/><circle cx="42" cy="20.500" r="3.700" fill="#5059c9"/><path d="M38 26H48V35Q48 41 42 41H38z" fill="#5059c9"/><path d="M22 26H40V38Q39 46 31 46T22 38z" fill="#7b83eb"/><rect x="12" y="21" width="18" height="18" rx="1.500" fill="#4b53bc"/><text x="21" y="35" font-size="13" font-weight="700" text-anchor="middle" fill="#fff" font-family='"Noto Sans",sans-serif'>T</text>`)}
        ${this.app(svg`<path d="M22 19V14H39V19" fill="none" stroke="#28a8ea" stroke-width="2.500"/><path d="M12.500 17H48V44Q48 48 44 48H16.500Q12.500 48 12.500 44z" fill="#eee"/><path d="M23 25h7v7h-7z" fill="#f25022"/><path d="M31 25h7v7h-7z" fill="#7fba00"/><path d="M23 33h7v7h-7z" fill="#00a4ef"/><path d="M31 33h7v7h-7z" fill="#ffb900"/>`)}
        ${this.app(svg`<circle cx="29" cy="30" r="17" fill="#0096d6" stroke="#fff" stroke-width="1.800"/><path d="M23 25Q23 19 29 19T35.500 24.500C35.500 29 29 30 29 35" fill="none" stroke="#fff" stroke-width="4.500"/><circle cx="29" cy="41" r="2.800" fill="#fff"/><circle cx="43" cy="16.500" r="12" fill="#ffc20e"/>`)}
        ${this.app(svg`<rect x="15" y="12.500" width="31" height="31" rx="3" fill="#fff" stroke="#bdbdbd"/><text x="30" y="34" font-size="27" font-weight="700" text-anchor="middle" fill="#000" stroke="#000" stroke-width=".8" font-family='"Liberation Sans",sans-serif'>a</text><path d="M20 36Q30 42.500 38 37" fill="none" stroke="#ff9900" stroke-width="2.200"/><path d="M36 34.500L41 35L39.500 40" fill="none" stroke="#ff9900" stroke-width="1.500"/>`)}
        ${this.app(svg`<path d="M14 12L30 20L46 12V40L30 48L14 40zM20 22V36L30 41L40 36V22L30 27z" fill="#c8282b" fill-rule="evenodd"/>`)}
        ${this.app(svg`<path d="M19 23L34 14L48 24V42Q48 45 45 45H22z" fill="#1490df"/><path d="M24 33L46 17L48 25L30 40z" fill="#0b4fae"/><path d="M24 45L48 28V42Q48 45 45 45z" fill="#50d9ff"/><rect x="12" y="21" width="18" height="18" rx="2" fill="#0f6cbd"/><ellipse cx="21" cy="30" rx="4" ry="4.800" fill="none" stroke="#fff" stroke-width="2.400"/>`)}
        ${this.app(svg`<path d="M12 16Q12 14 14 14H23L27 18H12z" fill="#e8a30c"/><path d="M12 20L24 20L27 17H46Q48 17 48 19V46H12z" fill="#fdcb45"/><path d="M18 47V40Q18 36 22 36H38Q42 36 42 40V47z" fill="#1474c4"/><path d="M23 41H37" stroke="#0b4f91" stroke-width="1.600"/>`, "run")}
        ${this.app(svg`<rect x="13" y="16" width="33" height="27" fill="#000" stroke="#15418f" stroke-width="1.500"/><path d="M13 16H46V21H13z" fill="#2c7be0"/><path d="M42 17h3v3h-3z" fill="#e04b3a"/><text x="15" y="31" font-size="9" fill="#e8e8e8" textLength="28" lengthAdjust="spacingAndGlyphs" font-family='"Noto Sans",sans-serif'>MySQL&gt;</text>`)}
        ${this.app(svg`<defs><linearGradient id="e1" x1="0" x2="1"><stop offset="0" stop-color="#1f9fe0"/><stop offset=".6" stop-color="#34c6c8"/><stop offset="1" stop-color="#6be35a"/></linearGradient><linearGradient id="e2" x1="0" x2="0" y1="0" y2="1"><stop offset="0" stop-color="#1fa5e3"/><stop offset="1" stop-color="#0c64bf"/></linearGradient></defs>
          <path d="M12 30C12 19 20 12 30 12S48 19 48 27C48 34 42 37 37 36.500Q33 36 34 33.500C37 29 33 23 27 22.500Q17 22 12 30z" fill="url(#e1)"/><path d="M12 30C14 23 22 21 27 22.500Q24 24 23 29C22 40 33 44 45 39Q40 48 30 48C19 48 12 40 12 30z" fill="url(#e2)"/><path d="M25 25C20 31 25 46 35 47C40 46 43 43 45 39C37 43 26 39 25 25z" fill="#114a9b"/>`, "on run")}
        ${this.app(svg`<path d="M18 15.500H35L42 22V47H18z" fill="#fff"/><path d="M35 15.500V22H42z" fill="#d5d5d5" stroke="#999" stroke-width=".8"/><path d="M23 34H34M29 28L36 34L29 40" fill="none" stroke="#12b312" stroke-width="4"/>`, "rec run")}
        ${this.app(svg`<path d="M28.500 46.500A16 16 0 1 1 33 46.200" fill="none" stroke="#00caff" stroke-width="4.500"/><path d="M28 48Q28 42 32 43.500Q40 41 42 34L46 38Q40 48 28 48z" fill="#00caff"/>`, "run")}
        ${this.app(svg`<circle cx="30" cy="30" r="18" fill="#1ed760"/><path d="M19.500 25Q31 21 42 27M20.500 31Q31 28 40 33M21.500 36.500Q30 34 38 38" fill="none" stroke="#111" stroke-width="2.800" stroke-linecap="round"/>`, "run")}
        ${this.app(svg`<path d="M39 12L48 16V44L39 48z" fill="#27a9f3"/><path d="M39 12V22L17 39L13 37V34z" fill="#0a6ab5"/><path d="M39 48V38L17 21L13 23V26z" fill="#0f86d3"/>`, "run")}
      </div>
      <div class="tray">
        <div class="mid chevron">${stroke("M4 17L12 8L20 17", 22, "#fff", 2)}</div>
        <div class="mid cloud"><svg width="24" height="24" viewBox="0 0 24 24"><path d="M6 17A5 5 0 0 1 5 8A7 7 0 0 1 18 6L22 12L14 18z" fill="#8f8f8f"/><path d="M5 19A5 5 0 0 1 5 9Q10 9 14 18z" fill="#eee"/><circle cx="17.500" cy="17.500" r="6.500" fill="#e0242f"/><path d="M15 15L20 20M20 15L15 20" stroke="#fff" stroke-width="1.600"/></svg></div>
        <div class="stack">${fit("ENG", 34, 17.5, "#fff")}${fit("IN", 17, 17.5, "#fff")}</div>
        <div class="mid wifi">${stroke("M1 9.500Q12-1.500 23 9.500M4.500 13.500Q12 6 19.500 13.500M8 17.500Q12 13 16 17.500M12 20.500V21", 24, "#fff", 1.9)}</div>
        <div class="mid sound">${stroke("M1.500 8.500H5.500L10.500 4V21L5.500 16.500H1.500zM15 8.500L23 16.500M23 8.500L15 16.500", 24, "#fff", 1.7)}</div>
        <div class="mid power"><svg width="26" height="26" viewBox="0 0 26 26" fill="none" stroke="#fff" stroke-width="1.800"><path d="M13 6H19Q22 6 22 9V17Q22 20 19 20H6Q3 20 3 17.500M23.500 10.500V15.500"/><path d="M6 20Q9 16 8 13Q3 14 2 9Q7 6 9 .5Q14 8 8.500 13" fill="#fff" stroke="none"/><path d="M8 21L11 12"/></svg></div>
        <div class="stack clock">${fit("19:15", 43, 17.5, "#fff")}${fit("18-06-2025", 93, 17.5, "#fff")}</div>
      </div>`;
  }
}

/* ---------- root ---------- */

@customElement("app-root")
export class AppRoot extends LitElement {
  @property() label = "";

  static styles = css`
    :host { display: flex; flex-direction: column; width: 1920px; height: 1080px; overflow: hidden; background: #f7f7f7; }
    browser-bar, task-bar { flex: none; }
    .frame { display: grid; grid-template-columns: 1885px 23px; grid-template-rows: 868px 24px; width: 1908px; margin: 0 6px 5px; border-radius: 14px; overflow: hidden; background: #fcfcfc; box-shadow: 0 0 0 1px #e3e3e3, 0 1px 3px 1px #dcdcdc; }
    .vbar { display: flex; flex-direction: column; align-items: center; padding-top: 12px; }
    .vthumb { width: 13px; height: 513px; margin: 11px 0 297px; border-radius: 7px; background: #8b8b8b; }
    .hbar { display: flex; align-items: center; padding-left: 11px; padding-bottom: 1px; }
    .hthumb { width: 1793px; height: 13px; margin: 0 34px 0 12px; border-radius: 7px; background: #8b8b8b; }
    svg { display: block; flex: none; fill: #8b8b8b; stroke: #8b8b8b; stroke-width: 2; stroke-linejoin: round; }
  `;

  render() {
    return html`
      <browser-bar></browser-bar>
      <div class="frame">
        <hospital-page></hospital-page>
        <div class="vbar">
          <svg width="14" height="12" viewBox="0 0 14 12"><path d="M7 1.500L13 10.500H1z"/></svg>
          <div class="vthumb"></div>
          <svg width="14" height="12" viewBox="0 0 14 12"><path d="M7 10.500L13 1.500H1z"/></svg>
        </div>
        <div class="hbar">
          <svg width="12" height="14" viewBox="0 0 12 14"><path d="M1.500 7L10.500 1V13z"/></svg>
          <div class="hthumb"></div>
          <svg width="12" height="14" viewBox="0 0 12 14"><path d="M10.500 7L1.500 1V13z"/></svg>
        </div>
        <div></div>
      </div>
      <task-bar></task-bar>`;
  }
}
